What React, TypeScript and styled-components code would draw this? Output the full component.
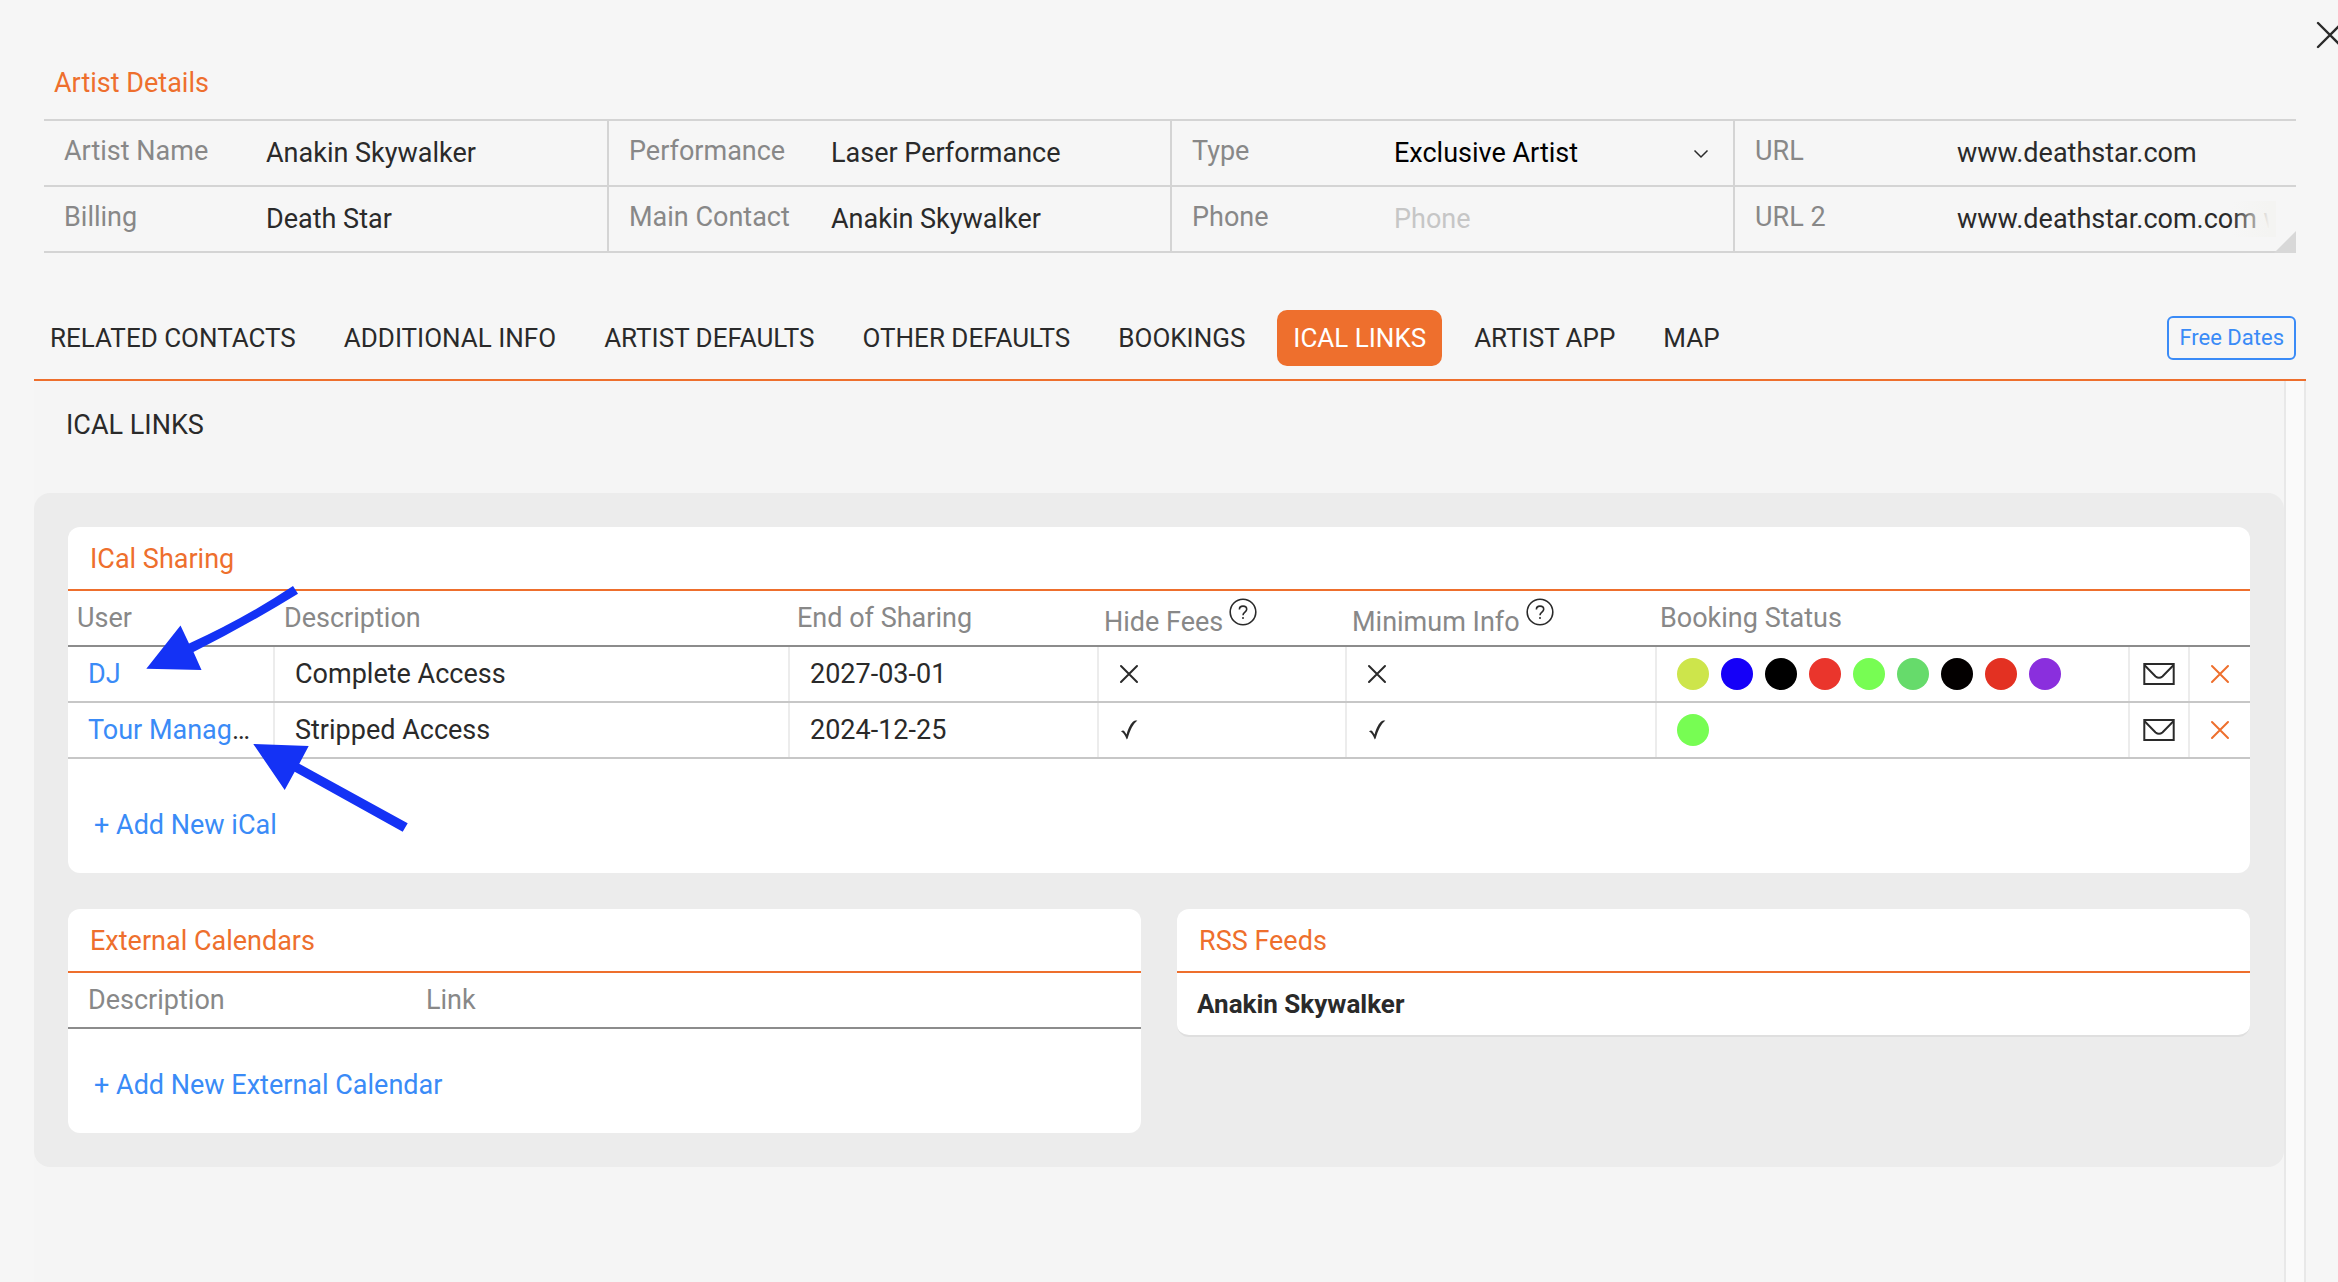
import React from "react";
import styled, { createGlobalStyle } from "styled-components";

const color = {
  orange: "#ee6f2d",
  blue: "#3a8bf7",
  text: "#2a2a2a",
  muted: "#888888",
  line: "#d4d4d4",
  page: "#f6f6f6",
  body: "#f5f5f5",
  panel: "#ececec",
  arrow: "#1432f5",
};

const GlobalStyle = createGlobalStyle`
  *, *::before, *::after { box-sizing: border-box; }
  body {
    margin: 0;
    background: ${color.page};
    color: ${color.text};
    font-family: Roboto, "Liberation Sans", sans-serif;
    font-size: 27px;
    line-height: 32px;
    overflow-x: hidden;
  }
  button, input, select { font: inherit; color: inherit; }
`;

const Page = styled.div`
  position: relative;
  display: flex;
  flex-direction: column;
  min-height: 100vh;
  padding: 67px 32px 0 34px;
  overflow: hidden;
`;

const IconButton = styled.button`
  display: inline-flex;
  align-items: center;
  justify-content: center;
  padding: 0;
  border: 0;
  background: none;
  cursor: pointer;
`;

const CloseButton = styled(IconButton)`
  position: absolute;
  top: 19px;
  right: -8px;
`;

const Details = styled.section`
  margin: 0 10px 57px;
`;

const DetailsTitle = styled.h1`
  margin: 0 0 20px;
  padding-left: 10px;
  color: ${color.orange};
  font-size: 27px;
  font-weight: 400;
`;

const DetailsGrid = styled.div`
  position: relative;
  display: grid;
  grid-template-columns: repeat(4, minmax(0, 1fr));
  border-top: 2px solid ${color.line};
`;

const Field = styled.div`
  display: grid;
  grid-template-columns: 202px minmax(0, 1fr);
  align-items: center;
  padding: 14px 20px;
  border-bottom: 2px solid ${color.line};
  border-left: 2px solid ${color.line};

  &:nth-child(4n + 1) {
    border-left: 0;
  }
`;

const FieldLabel = styled.label`
  padding-bottom: 4px;
  color: ${color.muted};
`;

const FieldControl = styled.div`
  position: relative;
  display: flex;
`;

const TextInput = styled.input`
  flex: 1;
  min-width: 0;
  height: 36px;
  padding: 0;
  border: 0;
  outline: 0;
  background: transparent;

  &::placeholder {
    color: #c6c6c6;
    opacity: 1;
  }
`;

const Select = styled.select`
  flex: 1;
  min-width: 0;
  height: 36px;
  padding: 0;
  border: 0;
  outline: 0;
  appearance: none;
  background: transparent;
  color: #000;
`;

const Chevron = styled.svg`
  position: absolute;
  top: 14px;
  right: 4px;
  pointer-events: none;
`;

const Fade = styled.span`
  position: absolute;
  top: 0;
  right: 0;
  width: 44px;
  height: 36px;
  background: linear-gradient(to right, rgba(244, 244, 242, 0), #f4f4f2 85%);
  pointer-events: none;
`;

const ResizeCorner = styled.span`
  position: absolute;
  right: 0;
  bottom: 0;
  width: 22px;
  height: 22px;
  background: #d8d8d8;
  clip-path: polygon(100% 0, 100% 100%, 0 100%);
`;

const TabBar = styled.nav`
  display: flex;
  align-items: center;
  justify-content: space-between;
  padding: 0 10px 13px 0;
  border-bottom: 2px solid ${color.orange};
`;

const Tabs = styled.div`
  display: flex;
  gap: 16px;
`;

const Tab = styled.button<{ $active?: boolean }>`
  padding: 12px 16px;
  border: 0;
  border-radius: 10px;
  background: ${(p) => (p.$active ? color.orange : "transparent")};
  color: ${(p) => (p.$active ? "#fff" : color.text)};
  font-size: 26px;
  white-space: nowrap;
  cursor: pointer;
`;

const OutlineButton = styled.button`
  padding: 4px 10px;
  border: 2px solid ${color.blue};
  border-radius: 6px;
  background: transparent;
  color: ${color.blue};
  font-size: 22px;
  white-space: nowrap;
  cursor: pointer;
`;

const Scroller = styled.div`
  flex: 1;
  display: grid;
  grid-template-columns: minmax(0, 1fr) 22px;
  background: ${color.body};
`;

const ScrollTrack = styled.div`
  border: solid #e8e8e8;
  border-width: 0 2px;
  background: #fafafa;
`;

const SectionTitle = styled.h2`
  margin: 0;
  padding: 28px 32px 52px;
  font-size: 27px;
  font-weight: 400;
`;

const Panel = styled.div`
  display: flex;
  flex-direction: column;
  gap: 36px;
  padding: 34px;
  border-radius: 16px;
  background: ${color.panel};
`;

const CardRow = styled.div`
  display: grid;
  grid-template-columns: repeat(2, minmax(0, 1fr));
  align-items: start;
  gap: 36px;
`;

const Card = styled.section<{ $ruled?: boolean }>`
  border-bottom: ${(p) => (p.$ruled ? "2px solid #dfdfdf" : "0")};
  border-radius: 12px;
  background: #fff;
  overflow: hidden;
`;

const CardTitle = styled.h3`
  margin: 0;
  padding: 16px 22px 14px;
  border-bottom: 2px solid ${color.orange};
  color: ${color.orange};
  font-size: 27px;
  font-weight: 400;
`;

const Table = styled.table`
  display: block;

  thead, tbody { display: block; }
`;

const SharingHead = styled.tr`
  display: grid;
  grid-template-columns: 207fr 513fr 307fr 248fr 308fr 599fr;
  height: 56px;
  border-bottom: 2px solid #8c8c8c;
`;

const SharingRow = styled.tr`
  display: grid;
  grid-template-columns: 205fr 515fr 309fr 248fr 310fr 473fr 60fr 62fr;
  height: 56px;
  border-bottom: 2px solid #c7c7c7;
`;

const CalendarHead = styled(SharingHead)`
  grid-template-columns: 338fr 735fr;
`;

const HeadCell = styled.th<{ $inset?: boolean }>`
  display: flex;
  align-items: center;
  padding: 0 ${(p) => (p.$inset ? 20 : 9)}px;
  color: ${color.muted};
  font-weight: 400;
  text-align: left;
  white-space: nowrap;
`;

const HelpLabel = styled.span`
  display: flex;
  align-items: flex-start;
  gap: 6px;
`;

const HelpText = styled.span`
  padding-top: 8px;
`;

const Cell = styled.td`
  display: flex;
  align-items: center;
  gap: 12px;
  padding: 0 20px;
  border-left: 2px solid #ececec;
`;

const UserCell = styled.td`
  padding: 11px 20px;
  overflow: hidden;
  text-overflow: ellipsis;
  white-space: nowrap;
`;

const ActionCell = styled(Cell)`
  justify-content: center;
  padding: 0;
`;

const UserLink = styled.a`
  color: ${color.blue};
  text-decoration: none;
`;

const Dot = styled.span<{ $fill: string }>`
  width: 32px;
  height: 32px;
  border-radius: 50%;
  background: ${(p) => p.$fill};
`;

const CardFooter = styled.div<{ $roomy?: boolean }>`
  display: flex;
  padding: ${(p) => (p.$roomy ? 50 : 40)}px 26px 32px;
`;

const AddButton = styled.button`
  padding: 0;
  border: 0;
  background: none;
  color: ${color.blue};
  cursor: pointer;
`;

const FeedName = styled.p`
  margin: 0;
  padding: 15px 20px;
  font-size: 26px;
  font-weight: 700;
`;

const Arrows = styled.svg`
  position: absolute;
  top: 570px;
  left: 120px;
  pointer-events: none;
`;

function Cross({ size, arm, width, stroke }: { size: number; arm: number; width: number; stroke: string }) {
  const a = size / 2 - arm;
  const b = size / 2 + arm;
  return (
    <svg width={size} height={size} viewBox={`0 0 ${size} ${size}`} fill="none" stroke={stroke} strokeWidth={width} strokeLinecap="round" aria-hidden="true">
      <path d={`M${a} ${a}L${b} ${b}M${b} ${a}L${a} ${b}`} />
    </svg>
  );
}

function Check() {
  return (
    <svg width="20" height="22" viewBox="0 0 20 22" fill={color.text} aria-label="Yes">
      <path d="M2 12.6 C3.2 11.2 4.6 11 5.4 12.2 L7.6 15.4 C9.4 9 12 3.8 15 2 C16.2 1.4 17.6 1.5 18.4 1.6 C14 5 11.2 11 8.6 19.6 L7.8 20.4 C6.4 17.6 4.8 13.6 2 12.6Z" />
    </svg>
  );
}

function HelpIcon() {
  return (
    <svg width="28" height="28" viewBox="0 0 28 28" fill="none" stroke={color.text} aria-hidden="true">
      <circle cx="14" cy="14" r="12.8" strokeWidth="1.6" />
      <path d="M10.4 11.4C10.4 9.2 12 8.1 14 8.1C16.1 8.1 17.7 9.4 17.7 11.3C17.7 14 14 14.1 14 17.2" strokeWidth="1.6" />
      <circle cx="14" cy="20" r="1" fill={color.text} stroke="none" />
    </svg>
  );
}

function Envelope() {
  return (
    <svg width="32" height="24" viewBox="0 0 32 24" fill="none" stroke={color.text} strokeWidth="2" aria-hidden="true">
      <rect x="1.3" y="2" width="29.4" height="20" />
      <path d="M1.6 3.2L12.6 14.4Q16 17.2 19.4 14.4L30.4 3.2" />
    </svg>
  );
}

const fields = [
  { id: "artist-name", label: "Artist Name", value: "Anakin Skywalker" },
  { id: "performance", label: "Performance", value: "Laser Performance" },
  { id: "type", label: "Type", options: ["Exclusive Artist"] },
  { id: "url", label: "URL", value: "www.deathstar.com" },
  { id: "billing", label: "Billing", value: "Death Star" },
  { id: "main-contact", label: "Main Contact", value: "Anakin Skywalker" },
  { id: "phone", label: "Phone", value: "", placeholder: "Phone" },
  { id: "url-2", label: "URL 2", value: "www.deathstar.com.com www", fade: true },
];

const tabs = ["RELATED CONTACTS", "ADDITIONAL INFO", "ARTIST DEFAULTS", "OTHER DEFAULTS", "BOOKINGS", "ICAL LINKS", "ARTIST APP", "MAP"];

const shares = [
  {
    user: "DJ",
    description: "Complete Access",
    end: "2027-03-01",
    hideFees: false,
    minimumInfo: false,
    statuses: ["#cde54b", "#1500f8", "#000000", "#ea352c", "#77fd53", "#66db6b", "#030000", "#e33122", "#8a2fdd"],
  },
  {
    user: "Tour Manager",
    description: "Stripped Access",
    end: "2024-12-25",
    hideFees: true,
    minimumInfo: true,
    statuses: ["#77fd53"],
  },
];

function Flag({ on }: { on: boolean }) {
  return on ? <Check /> : <Cross size={20} arm={8} width={2} stroke={color.text} />;
}

function HelpHeading({ children }: { children: string }) {
  return (
    <HelpLabel>
      <HelpText>{children}</HelpText>
      <IconButton type="button" aria-label={`About ${children}`}>
        <HelpIcon />
      </IconButton>
    </HelpLabel>
  );
}

export default function App() {
  return (
    <Page>
      <GlobalStyle />
      <CloseButton type="button" aria-label="Close">
        <Cross size={32} arm={12} width={2.4} stroke={color.text} />
      </CloseButton>

      <Details>
        <DetailsTitle>Artist Details</DetailsTitle>
        <DetailsGrid>
          {fields.map((f) => (
            <Field key={f.id}>
              <FieldLabel htmlFor={f.id}>{f.label}</FieldLabel>
              <FieldControl>
                {f.options ? (
                  <>
                    <Select id={f.id} defaultValue={f.options[0]}>
                      {f.options.map((o) => (
                        <option key={o}>{o}</option>
                      ))}
                    </Select>
                    <Chevron width="16" height="10" viewBox="0 0 16 10" fill="none" stroke={color.text} strokeWidth="1.5">
                      <path d="M1.5 1.5L8 8L14.5 1.5" />
                    </Chevron>
                  </>
                ) : (
                  <TextInput id={f.id} defaultValue={f.value} placeholder={f.placeholder} />
                )}
                {f.fade && <Fade />}
              </FieldControl>
            </Field>
          ))}
          <ResizeCorner />
        </DetailsGrid>
      </Details>

      <TabBar>
        <Tabs>
          {tabs.map((t) => (
            <Tab key={t} type="button" $active={t === "ICAL LINKS"}>
              {t}
            </Tab>
          ))}
        </Tabs>
        <OutlineButton type="button">Free Dates</OutlineButton>
      </TabBar>

      <Scroller>
        <main>
          <SectionTitle>ICAL LINKS</SectionTitle>
          <Panel>
            <Card>
              <CardTitle>ICal Sharing</CardTitle>
              <Table>
                <thead>
                  <SharingHead>
                    <HeadCell>User</HeadCell>
                    <HeadCell>Description</HeadCell>
                    <HeadCell>End of Sharing</HeadCell>
                    <HeadCell>
                      <HelpHeading>Hide Fees</HelpHeading>
                    </HeadCell>
                    <HeadCell>
                      <HelpHeading>Minimum Info</HelpHeading>
                    </HeadCell>
                    <HeadCell>Booking Status</HeadCell>
                  </SharingHead>
                </thead>
                <tbody>
                  {shares.map((s) => (
                    <SharingRow key={s.user}>
                      <UserCell>
                        <UserLink href="#">{s.user}</UserLink>
                      </UserCell>
                      <Cell>{s.description}</Cell>
                      <Cell>{s.end}</Cell>
                      <Cell>
                        <Flag on={s.hideFees} />
                      </Cell>
                      <Cell>
                        <Flag on={s.minimumInfo} />
                      </Cell>
                      <Cell>
                        {s.statuses.map((c, i) => (
                          <Dot key={i} $fill={c} />
                        ))}
                      </Cell>
                      <ActionCell>
                        <IconButton type="button" aria-label={`Email ${s.user}`}>
                          <Envelope />
                        </IconButton>
                      </ActionCell>
                      <ActionCell>
                        <IconButton type="button" aria-label={`Remove ${s.user}`}>
                          <Cross size={20} arm={8} width={2} stroke={color.orange} />
                        </IconButton>
                      </ActionCell>
                    </SharingRow>
                  ))}
                </tbody>
              </Table>
              <CardFooter $roomy>
                <AddButton type="button">+ Add New iCal</AddButton>
              </CardFooter>
            </Card>

            <CardRow>
              <Card>
                <CardTitle>External Calendars</CardTitle>
                <Table>
                  <thead>
                    <CalendarHead>
                      <HeadCell $inset>Description</HeadCell>
                      <HeadCell $inset>Link</HeadCell>
                    </CalendarHead>
                  </thead>
                </Table>
                <CardFooter>
                  <AddButton type="button">+ Add New External Calendar</AddButton>
                </CardFooter>
              </Card>
              <Card $ruled>
                <CardTitle>RSS Feeds</CardTitle>
                <FeedName>Anakin Skywalker</FeedName>
              </Card>
            </CardRow>
          </Panel>
        </main>
        <ScrollTrack />
      </Scroller>

      <Arrows width="300" height="270" viewBox="0 0 300 270" fill={color.arrow} stroke="none" aria-hidden="true">
        <path d="M26.3 98.7L60.5 55.5L69 73.5Q125 48 173 16L178 23.7Q128 54.5 73.5 82L81.5 100Z" />
        <path d="M133.3 174L188.7 176L179.3 193.7L287.7 253.3L282.7 261.7L174.7 201.7L164.7 220Z" />
      </Arrows>
    </Page>
  );
}
